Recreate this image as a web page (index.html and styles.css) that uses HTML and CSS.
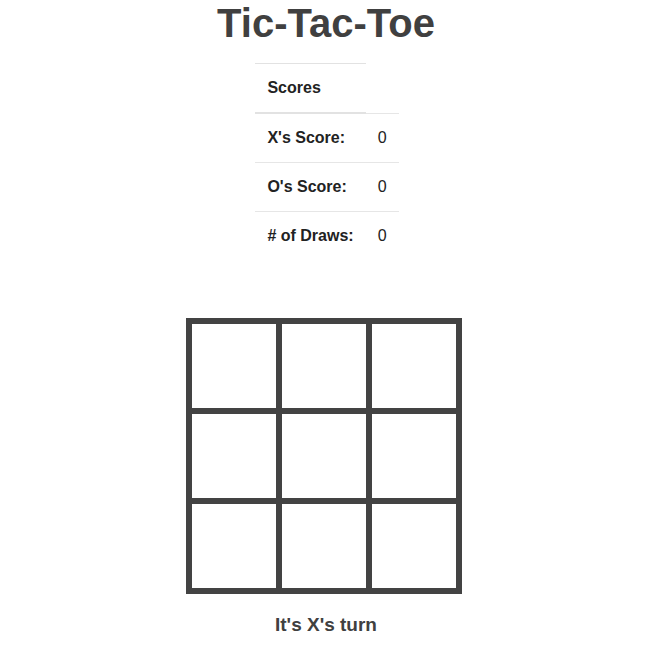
FILE: index.html
```html
<!DOCTYPE html>
<html lang="en">
<head>
    <meta charset="UTF-8">
    <meta name="viewport" content="width=device-width, initial-scale=1.0">
    <title>Tic-Tac-Toe</title>
    <link rel="stylesheet" href="styles.css">
</head>
<body>
    <div id="game">
        <h1 class="title">Tic-Tac-Toe</h1>

        <table class="scores">
            <thead>
                <tr>
                    <th>Scores</th>
                </tr>
            </thead>
            <tbody>
                <tr>
                    <td class="label">X's Score:</td>
                    <td id="xScore">0</td>
                </tr>
                <tr>
                    <td class="label">O's Score:</td>
                    <td id="oScore">0</td>
                </tr>
                <tr>
                    <td class="label"># of Draws:</td>
                    <td id="draws">0</td>
                </tr>
            </tbody>
        </table>

        <div class="board">
            <div class="cell"></div>
            <div class="cell"></div>
            <div class="cell"></div>
            <div class="cell"></div>
            <div class="cell"></div>
            <div class="cell"></div>
            <div class="cell"></div>
            <div class="cell"></div>
            <div class="cell"></div>
        </div>

        <p class="turn">It's X's turn</p>
    </div>
</body>
</html>
```

FILE: styles.css
```css
body{
    margin: 0;
    background: #fff;
    color: #333;
    font-family: "Liberation Sans", Arial, sans-serif;
}

#game{
    display: flex;
    flex-direction: column;
    align-items: center;
}

.title{
    margin: 1px 0 18px;
    font-size: 40px;
    line-height: 44px;
    font-weight: bold;
    color: #404040;
}

/*****
scores
******/
.scores{
    border-collapse: collapse;
    font-size: 16px;
    line-height: 24px;
    color: #222;
    margin-left: 2px;
}

.scores th,
.scores td{
    padding: 12px;
    text-align: left;
}

.scores th{
    border-top: 1px solid #e2e2e2;
    border-bottom: 2px solid #e2e2e2;
}

.scores td{
    border-top: 1px solid #e6e6e6;
}

.scores .label{
    font-weight: bold;
}

/*****
board
******/
.board{
    margin-top: 58px;
    margin-right: 4px;
    display: grid;
    grid-template-columns: repeat(3, 84px);
    grid-template-rows: repeat(3, 84px);
    gap: 6px;
    padding: 6px;
    background: #434343;
}

.cell{
    background: #fff;
}

.turn{
    margin: 19px 0 0;
    font-size: 19px;
    line-height: 24px;
    font-weight: bold;
    color: #404040;
}
```
